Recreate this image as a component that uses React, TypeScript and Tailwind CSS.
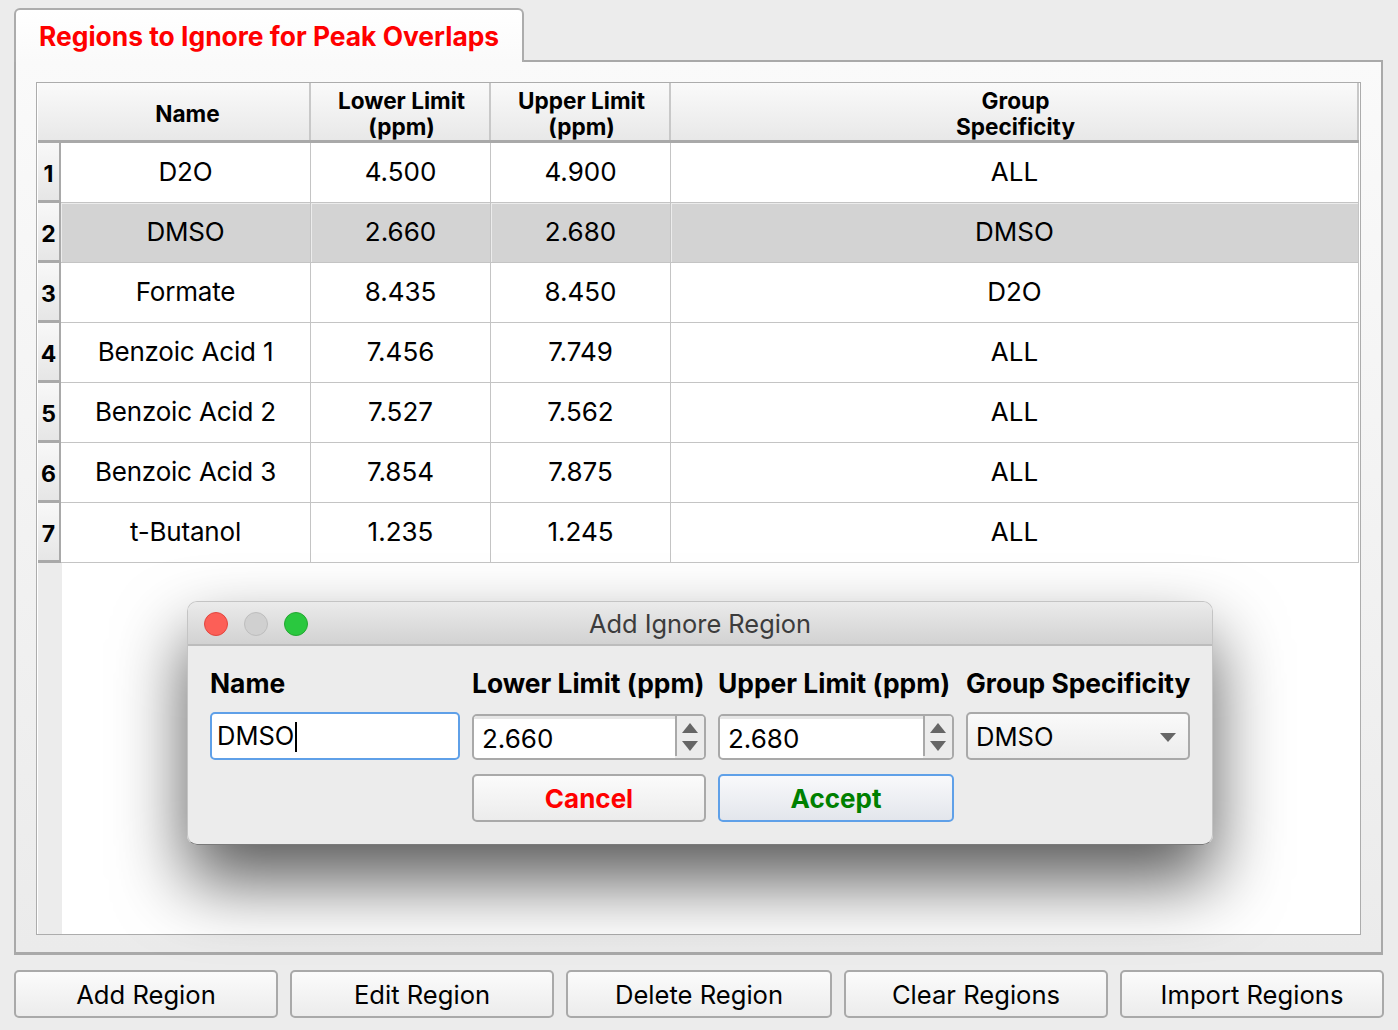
const rows = [
  ["D2O", "4.500", "4.900", "ALL"],
  ["DMSO", "2.660", "2.680", "DMSO"],
  ["Formate", "8.435", "8.450", "D2O"],
  ["Benzoic Acid 1", "7.456", "7.749", "ALL"],
  ["Benzoic Acid 2", "7.527", "7.562", "ALL"],
  ["Benzoic Acid 3", "7.854", "7.875", "ALL"],
  ["t-Butanol", "1.235", "1.245", "ALL"],
];

const bottomButtons = [
  { label: "Add Region", width: "w-[264px]" },
  { label: "Edit Region", width: "w-[264px]" },
  { label: "Delete Region", width: "w-[266px]" },
  { label: "Clear Regions", width: "w-[264px]" },
  { label: "Import Regions", width: "w-[264px]" },
];

function HeaderCell({ children, className }: { children: React.ReactNode; className: string }) {
  return (
    <div className={`flex flex-col items-center justify-center border-r-2 border-[#c8c8c8] pt-[5px] text-[22.6px] font-bold leading-[26px] text-black ${className}`}>
      {children}
    </div>
  );
}

function TableRow({ row, index }: { row: string[]; index: number }) {
  const selected = index === 1;
  const cell = `flex items-center justify-center border-r border-b border-[#c4c4c4] pb-[3px] ${selected ? "bg-[#d3d3d3] shadow-[inset_1px_1px_0_#ececec]" : "bg-white"}`;
  return (
    <div className="flex h-[60px] text-[26px] text-black">
      <div className="flex w-[23px] items-center justify-center border-r-[2px] border-b-[3px] border-[#a9a9a9] bg-gradient-to-b from-[#f8f8f8] to-[#e6e6e6] pt-[5px] text-[23px] font-bold">
        {index + 1}
      </div>
      <div className={`w-[250px] tracking-[-0.2px] ${cell}`}>{row[0]}</div>
      <div className={`w-[180px] ${cell}`}>{row[1]}</div>
      <div className={`w-[180px] ${cell}`}>{row[2]}</div>
      <div className={`w-[688px] ${cell}`}>{row[3]}</div>
    </div>
  );
}

function SpinBox({ value, width }: { value: string; width: string }) {
  return (
    <div className={`flex h-[46px] ${width} overflow-hidden rounded-[5px] border-2 border-[#a9a9a9] bg-white`}>
      <div className="flex flex-1 items-center border-t-[3px] border-[#e6e6e6] pl-[8px] text-[26px] text-black">{value}</div>
      <div className="flex w-[29px] flex-col items-center bg-[#ececec]">
        <div className="flex w-full flex-1 flex-col items-center justify-center gap-[8px] border-l-2 border-[#a9a9a9] pr-[1px] pt-[1px]">
          <svg width="16" height="10" viewBox="0 0 16 10"><path d="M8 0 L16 10 H0 Z" fill="#666" /></svg>
          <svg width="16" height="10" viewBox="0 0 16 10"><path d="M8 10 L16 0 H0 Z" fill="#666" /></svg>
        </div>
        <div className="h-[2px]" />
      </div>
    </div>
  );
}

function IgnoreDialog() {
  return (
    <div className="absolute left-[187px] top-[601px] h-[244px] w-[1026px] overflow-hidden rounded-[10px] border border-[#c4c4c4] border-b-[#7a7a7a] bg-[#ececec]">
      <div className="relative flex h-[44px] items-center justify-center border-b-2 border-[#bcbcbc] bg-gradient-to-b from-[#ebebeb] to-[#d2d2d2] pt-[3px] text-[25.4px] text-[#3c3c3c]">
        Add Ignore Region
        <div className="absolute left-[16px] top-[10px] flex gap-[16px]">
          <span className="h-[24px] w-[24px] rounded-full border border-[#e2463f] bg-[#fc5f57]" />
          <span className="h-[24px] w-[24px] rounded-full border border-[#bdbdbd] bg-[#d0d0d0]" />
          <span className="h-[24px] w-[24px] rounded-full border border-[#24a732] bg-[#2ac83f]" />
        </div>
      </div>
      <div className="pl-[22px] pt-[21px]">
        <div className="flex h-[34px] items-center text-[26.4px] font-bold text-black">
          <span className="w-[262px]">Name</span>
          <span className="w-[246px]">Lower Limit (ppm)</span>
          <span className="w-[248px]">Upper Limit (ppm)</span>
          <span>Group Specificity</span>
        </div>
        <div className="mt-[11px] flex items-end">
          <div className="mr-[12px] flex h-[48px] w-[250px] items-center rounded-[5px] border-2 border-[#5fa0e8] bg-white pl-[5px] pt-[1px] text-[25.5px] text-black">
            DMSO<span className="ml-[1px] h-[30px] w-[2px] bg-black" />
          </div>
          <SpinBox value="2.660" width="w-[234px]" />
          <div className="w-[12px]" />
          <SpinBox value="2.680" width="w-[236px]" />
          <div className="w-[12px]" />
          <div className="flex h-[48px] w-[224px] items-center justify-between rounded-[5px] border-2 border-[#a9a9a9] bg-gradient-to-b from-[#fafafa] to-[#ececec] pl-[8px] pr-[12px] pt-[2px] text-[25.6px] text-black">
            DMSO
            <svg width="16" height="9" viewBox="0 0 16 9"><path d="M0 0 H16 L8 9 Z" fill="#666" /></svg>
          </div>
        </div>
        <div className="ml-[262px] mt-[14px] flex gap-[12px] text-[26px] font-bold">
          <div className="flex h-[48px] w-[234px] items-center justify-center rounded-[5px] border-2 border-[#a9a9a9] bg-gradient-to-b from-[#fbfbfb] to-[#ececec] pt-[1px] text-[#ff0000]">Cancel</div>
          <div className="flex h-[48px] w-[236px] items-center justify-center rounded-[5px] border-2 border-[#5fa0e8] bg-gradient-to-b from-[#f9f9fb] to-[#e3e6ec] pt-[1px] text-[#008000]">Accept</div>
        </div>
      </div>
    </div>
  );
}

export default function App() {
  return (
    <div className="relative h-[1030px] w-[1398px] overflow-hidden bg-[#ececec] font-['Inter','Liberation_Sans',sans-serif]">
      <div className="ml-[14px] pt-[8px]">
        <div className="relative z-10 -mb-[2px] flex h-[54px] w-[510px] items-center rounded-t-[6px] border-2 border-b-0 border-[#acacac] bg-gradient-to-b from-white to-[#fafafa] pl-[23px] pt-[2px] text-[26.4px] font-bold text-[#ff0000]">
          Regions to Ignore for Peak Overlaps
        </div>
        <div className="h-[895px] w-[1369px] border-2 border-b-[3px] border-[#a9a9a9] bg-gradient-to-b from-[#fafafa] to-[#ebebeb] pl-[20px] pt-[20px]">
          <div className="h-[853px] w-[1325px] border border-[#acacac] bg-white pl-[1px]">
            <div className="flex h-[60px] w-[1321px] border-b-[3px] border-[#a9a9a9] bg-gradient-to-b from-[#fafafa] to-[#e8e8e8]">
              <HeaderCell className="w-[273px] pl-[28px]">Name</HeaderCell>
              <HeaderCell className="w-[180px] pl-[3px]">
                <span>Lower Limit</span>
                <span>(ppm)</span>
              </HeaderCell>
              <HeaderCell className="w-[180px] pl-[3px]">
                <span>Upper Limit</span>
                <span>(ppm)</span>
              </HeaderCell>
              <HeaderCell className="flex-1 border-r-0 pl-[3px]">
                <span>Group</span>
                <span>Specificity</span>
              </HeaderCell>
            </div>
            {rows.map((row, i) => (
              <TableRow key={row[0]} row={row} index={i} />
            ))}
            <div className="h-[371px] w-[24px] bg-[#ececec]" />
          </div>
        </div>
        <div className="mt-[15px] flex gap-[12px] text-[25.6px] text-black">
          {bottomButtons.map((b) => (
            <div key={b.label} className={`flex h-[48px] ${b.width} items-center justify-center rounded-[5px] border-2 border-[#a9a9a9] bg-gradient-to-b from-[#fbfbfb] to-[#ececec] pt-[2px]`}>
              {b.label}
            </div>
          ))}
        </div>
      </div>
      <div className="absolute left-[187px] top-[601px] h-[244px] w-[1026px] rounded-[10px] shadow-[0_36px_70px_rgba(0,0,0,0.65)]" />
      <IgnoreDialog />
    </div>
  );
}
